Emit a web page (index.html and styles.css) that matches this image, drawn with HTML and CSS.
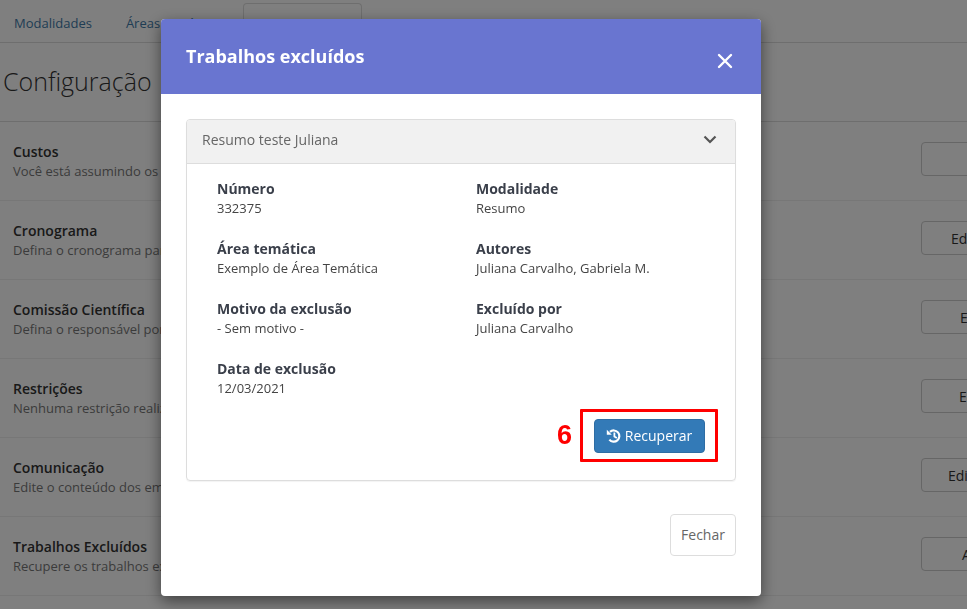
FILE: index.html
```html
<!DOCTYPE html>
<html lang="pt-BR">
<head>
<meta charset="utf-8">
<title>Trabalhos excluídos</title>
<link rel="stylesheet" href="styles.css">
</head>
<body>
<div class="page">
  <nav class="tabs">
    <a class="tab">Modalidades</a>
    <a class="tab tab-short">Áreas temáticas</a>
    <a class="tab active">Configuração</a>
  </nav>
  <h1 class="title">Configuração</h1>
  <section class="rows">
    <div class="row"><div class="row-text"><strong>Custos</strong><span>Você está assumindo os custos</span></div><button class="row-btn"></button></div>
    <div class="row"><div class="row-text"><strong>Cronograma</strong><span>Defina o cronograma para</span></div><button class="row-btn indent-a">Editar</button></div>
    <div class="row"><div class="row-text"><strong>Comissão Científica</strong><span>Defina o responsável por</span></div><button class="row-btn indent-b">Editar</button></div>
    <div class="row"><div class="row-text"><strong>Restrições</strong><span>Nenhuma restrição realizada</span></div><button class="row-btn indent-c">Editar</button></div>
    <div class="row"><div class="row-text"><strong>Comunicação</strong><span>Edite o conteúdo dos emails</span></div><button class="row-btn indent-d">Editar</button></div>
    <div class="row"><div class="row-text"><strong>Trabalhos Excluídos</strong><span>Recupere os trabalhos excluídos</span></div><button class="row-btn indent-e">Acessar</button></div>
  </section>
</div>
<div class="overlay"></div>
<div class="modal">
  <header class="modal-head">
    <h2>Trabalhos excluídos</h2>
    <svg class="close" width="16" height="16" viewBox="0 0 16 16"><path d="M2 2 L14 14 M14 2 L2 14" stroke="#fff" stroke-width="2.4" stroke-linecap="round" fill="none"/></svg>
  </header>
  <div class="modal-body">
    <div class="panel">
      <div class="panel-head">
        <span>Resumo teste Juliana</span>
        <svg width="14" height="9" viewBox="0 0 14 9"><path d="M1.5 1.5 L7 7 L12.5 1.5" stroke="#555" stroke-width="2.2" fill="none"/></svg>
      </div>
      <div class="panel-body">
        <dl class="fields">
          <div class="field"><dt>Número</dt><dd>332375</dd></div>
          <div class="field"><dt>Modalidade</dt><dd>Resumo</dd></div>
          <div class="field"><dt>Área temática</dt><dd>Exemplo de Área Temática</dd></div>
          <div class="field"><dt>Autores</dt><dd>Juliana Carvalho, Gabriela M.</dd></div>
          <div class="field"><dt>Motivo da exclusão</dt><dd>- Sem motivo -</dd></div>
          <div class="field"><dt>Excluído por</dt><dd>Juliana Carvalho</dd></div>
          <div class="field"><dt>Data de exclusão</dt><dd>12/03/2021</dd></div>
        </dl>
        <div class="action">
          <span class="step">6</span>
          <div class="highlight">
            <button class="recover">
              <svg width="16" height="16" viewBox="0 0 16 16"><path d="M4 3.9 A5.6 5.6 0 1 1 3.4 11.6" stroke="#fff" stroke-width="2.2" fill="none"/><path d="M0.8 1.8 L0.8 6.8 L5.8 6.8 Z" fill="#fff"/><path d="M8.4 4.6 L8.4 8.4 L10.8 10" stroke="#fff" stroke-width="1.8" fill="none"/></svg>
              Recuperar
            </button>
          </div>
        </div>
      </div>
    </div>
    <footer class="modal-foot"><button class="close-btn">Fechar</button></footer>
  </div>
</div>
</body>
</html>
```

FILE: styles.css
```css
* { box-sizing: border-box; }
html, body { margin: 0; height: 100%; overflow: hidden; }
body { font-family: "Open Sans", sans-serif; font-size: 13px; color: #333; background: #fff; }

.page { width: 1100px; }
.tabs { display: flex; align-items: flex-end; height: 43px; padding-left: 14px; border-bottom: 1px solid #ddd; }
.tab { font-size: 13px; color: #3f7aa8; height: 39px; line-height: 40px; margin-right: 34px; }
.tab-short { margin-right: 21px; }
.tab.active { width: 119px; border: 1px solid #ddd; border-bottom: 0; border-radius: 4px 4px 0 0; text-align: center; font-size: 14px; font-weight: 600; line-height: 41px; color: #333; }
.title { margin: 0; height: 79px; padding-left: 3px; font-size: 25px; font-weight: 300; line-height: 77px; color: #333; border-bottom: 1px solid #ddd; }
.row { display: flex; align-items: center; justify-content: space-between; height: 79px; padding-left: 13px; border-bottom: 1px solid #eee; }
.row-text { display: flex; flex-direction: column; }
.row-text strong { font-size: 14px; font-weight: 600; line-height: 19px; color: #333; }
.row-text span { margin-top: 1px; font-size: 13px; line-height: 18px; color: #777; }
.row-btn { width: 100px; height: 34px; margin-right: 79px; margin-bottom: 4px; padding: 0; border: 1px solid #ccc; border-radius: 4px; background: #fff; font: 14px "Open Sans", sans-serif; color: #333; text-align: left; }
.indent-a { padding-left: 29px; }
.indent-b { padding-left: 38px; }
.indent-c { padding-left: 37px; }
.indent-d { padding-left: 26px; }
.indent-e { padding-left: 40px; }

.overlay { position: fixed; inset: 0; background: rgba(0, 0, 0, .5); }
.modal { position: fixed; left: 161px; top: 19px; width: 600px; height: 577px; background: #fff; border-radius: 4px; box-shadow: 0 5px 15px rgba(0, 0, 0, .5); overflow: hidden; }
.modal-head { display: flex; align-items: center; justify-content: space-between; height: 75px; padding: 0 28px 0 25px; background: #6975d0; color: #fff; }
.modal-head h2 { margin: 0 0 2px; font-size: 18px; font-weight: 700; }
.close { margin-top: 8px; }
.modal-body { padding: 25px 25px 0; }
.panel { height: 362px; border: 1px solid #ddd; border-radius: 4px; overflow: hidden; box-shadow: 0 1px 1px rgba(0,0,0,.05); }
.panel-head { display: flex; align-items: center; justify-content: space-between; height: 44px; padding: 0 18px 5px 15px; background: #f1f1f1; border-bottom: 1px solid #ddd; font-size: 14px; color: #666; }
.panel-body { padding: 15px 30px 0; }
.fields { display: grid; grid-template-columns: 259px 1fr; grid-auto-rows: 60px; margin: 0; }
.field dt { font-size: 14px; font-weight: 700; line-height: 20px; color: #3a3f4a; }
.field dd { margin: 0; font-size: 13px; line-height: 18px; color: #444; }
.action { display: flex; align-items: center; justify-content: flex-end; gap: 8px; margin-right: -13px; margin-top: -10px; }
.step { font-family: "Liberation Sans", sans-serif; font-size: 27px; font-weight: 700; color: #f00; }
.highlight { display: flex; align-items: center; justify-content: center; width: 138px; height: 53px; border: 3px solid #f00; border-radius: 1px; }
.recover { display: flex; align-items: center; justify-content: center; gap: 3px; width: 111px; height: 34px; border: 1px solid #2e6da4; border-radius: 4px; background: #337ab7; color: #fff; font: 14px "Open Sans", sans-serif; padding: 0; }
.modal-foot { display: flex; justify-content: flex-end; margin-top: 33px; }
.close-btn { width: 66px; height: 42px; padding: 0 0 2px; border: 1px solid #ddd; border-radius: 4px; background: #fff; font: 14px "Open Sans", sans-serif; color: #666; }
```
